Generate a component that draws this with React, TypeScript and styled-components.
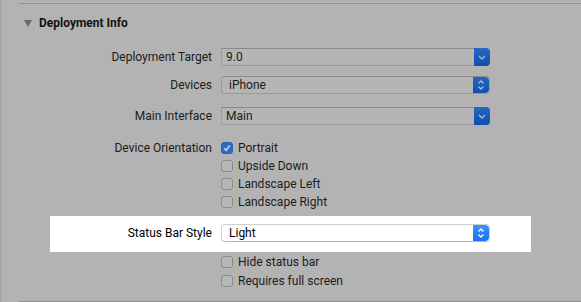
import React from "react";
import styled, { createGlobalStyle, css } from "styled-components";

const GlobalStyle = createGlobalStyle`
  html, body {
    margin: 0;
    padding: 0;
    background: #b3b3b3;
    overflow: hidden;
  }
  * {
    box-sizing: border-box;
  }
`;

const SPage = styled.div`
  width: 581px;
  height: 302px;
  padding-top: 3px;
  border-left: 2px solid #a7a7a7;
  font-family: Roboto, "Liberation Sans", sans-serif;
  font-size: 12px;
  color: #1c1c1c;
`;

const SSection = styled.div`
  margin-left: 17px;
  height: 299px;
  border-top: 1px solid #939393;
  border-bottom: 1px solid #939393;
  display: flex;
  flex-direction: column;
`;

const SHeader = styled.div`
  display: flex;
  align-items: center;
  gap: 7px;
  height: 38px;
  padding-left: 5px;
  font-weight: bold;
  color: #141414;
`;

const STriangle = styled.span`
  width: 0;
  height: 0;
  border-left: 4.5px solid transparent;
  border-right: 4.5px solid transparent;
  border-top: 7px solid #6a6a6a;
`;

interface IRowProps {
  $top: number;
  $labelWidth?: number;
}

const SRow = styled.div<IRowProps>`
  display: grid;
  grid-template-columns: ${({ $labelWidth }) => $labelWidth ?? 193}px 269px;
  column-gap: 9px;
  align-items: center;
  height: 18px;
  margin-top: ${({ $top }) => $top}px;
`;

const SLabel = styled.span`
  text-align: right;
  white-space: nowrap;
`;

const SBand = styled.div`
  margin: 5px 0 0 31px;
  width: 481px;
  height: 36px;
  padding-top: 8px;
  background: #ffffff;
  color: #000;
`;

interface ILitProps {
  $lit?: boolean;
}

const SCombo = styled.div`
  display: flex;
  height: 18px;
`;

const SField = styled.div`
  flex: 1;
  display: flex;
  align-items: center;
  padding-left: 4px;
  background: #b5b5b5;
  border: 1px solid #9d9d9d;
  border-top-color: #8a8a8a;
  border-right: none;
`;

const SPopup = styled.div<ILitProps>`
  display: flex;
  height: 18px;
  border-radius: 4px;
  border: 1px solid #9a9a9a;
  border-top-color: #8d8d8d;
  background: #b5b5b5;
  overflow: hidden;
  ${({ $lit }) =>
    $lit &&
    css`
      background: #fff;
      border-color: #cfcfcf;
      border-bottom-color: #b5b5b5;
    `}
`;

const SPopupText = styled.div`
  flex: 1;
  display: flex;
  align-items: center;
  padding-left: 7px;
`;

const SBlueButton = styled.div<ILitProps>`
  width: 16px;
  display: flex;
  align-items: center;
  justify-content: center;
  border-radius: 0 4px 4px 0;
  background: linear-gradient(#2767c2, #0e4fae);
  color: #a8b6cc;
  ${({ $lit }) =>
    $lit &&
    css`
      background: linear-gradient(#3b90fd, #1573f6);
      color: #fff;
    `}
`;

interface ICheckRowProps {
  $top?: number;
  $indent?: number;
}

const SCheckRow = styled.label<ICheckRowProps>`
  display: flex;
  align-items: center;
  gap: 5px;
  height: 18px;
  margin: ${({ $top }) => $top ?? 0}px 0 0 ${({ $indent }) => $indent ?? 202}px;
`;

const SCheck = styled.span<{ $checked?: boolean }>`
  width: 12px;
  height: 12px;
  border-radius: 3px;
  border: 1px solid #8b8b8b;
  background: #b7b7b7;
  display: flex;
  align-items: center;
  justify-content: center;
  ${({ $checked }) =>
    $checked &&
    css`
      border-color: #2a63b8;
      background: #2d6bc4;
    `}
`;

const DownChevron = () => (
  <svg width="8" height="5" viewBox="0 0 8 5">
    <path d="M1 1 L4 4 L7 1" fill="none" stroke="currentColor" strokeWidth="1.4" />
  </svg>
);

const UpDownChevron = () => (
  <svg width="8" height="12" viewBox="0 0 8 12">
    <path d="M1.5 4.5 L4 2 L6.5 4.5" fill="none" stroke="currentColor" strokeWidth="1.4" />
    <path d="M1.5 7.5 L4 10 L6.5 7.5" fill="none" stroke="currentColor" strokeWidth="1.4" />
  </svg>
);

const CheckMark = () => (
  <svg width="10" height="10" viewBox="0 0 10 10">
    <path d="M2.2 5.2 L4.2 7.2 L7.8 2.6" fill="none" stroke="#c9d4e4" strokeWidth="1.6" />
  </svg>
);

const Combo = ({ value }: { value: string }) => (
  <SCombo>
    <SField>{value}</SField>
    <SBlueButton>
      <DownChevron />
    </SBlueButton>
  </SCombo>
);

const Popup = ({ value, lit }: { value: string; lit?: boolean }) => (
  <SPopup $lit={lit}>
    <SPopupText>{value}</SPopupText>
    <SBlueButton $lit={lit}>
      <UpDownChevron />
    </SBlueButton>
  </SPopup>
);

interface ICheckProps {
  label: string;
  checked?: boolean;
  top?: number;
  indent?: number;
}

const Check = ({ label, checked, top, indent }: ICheckProps) => (
  <SCheckRow $top={top} $indent={indent}>
    <SCheck $checked={checked}>{checked && <CheckMark />}</SCheck>
    {label}
  </SCheckRow>
);

const App = () => (
  <SPage>
    <GlobalStyle />
    <SSection>
      <SHeader>
        <STriangle />
        Deployment Info
      </SHeader>
      <SRow $top={6}>
        <SLabel>Deployment Target</SLabel>
        <Combo value="9.0" />
      </SRow>
      <SRow $top={10}>
        <SLabel>Devices</SLabel>
        <Popup value="iPhone" />
      </SRow>
      <SRow $top={13}>
        <SLabel>Main Interface</SLabel>
        <Combo value="Main" />
      </SRow>
      <SRow $top={14}>
        <SLabel>Device Orientation</SLabel>
        <Check label="Portrait" checked indent={0} />
      </SRow>
      <Check label="Upside Down" />
      <Check label="Landscape Left" />
      <Check label="Landscape Right" />
      <SBand>
        <SRow $top={0} $labelWidth={162}>
          <SLabel>Status Bar Style</SLabel>
          <Popup value="Light" lit />
        </SRow>
      </SBand>
      <Check label="Hide status bar" top={1} />
      <Check label="Requires full screen" top={1} />
    </SSection>
  </SPage>
);

export default App;
